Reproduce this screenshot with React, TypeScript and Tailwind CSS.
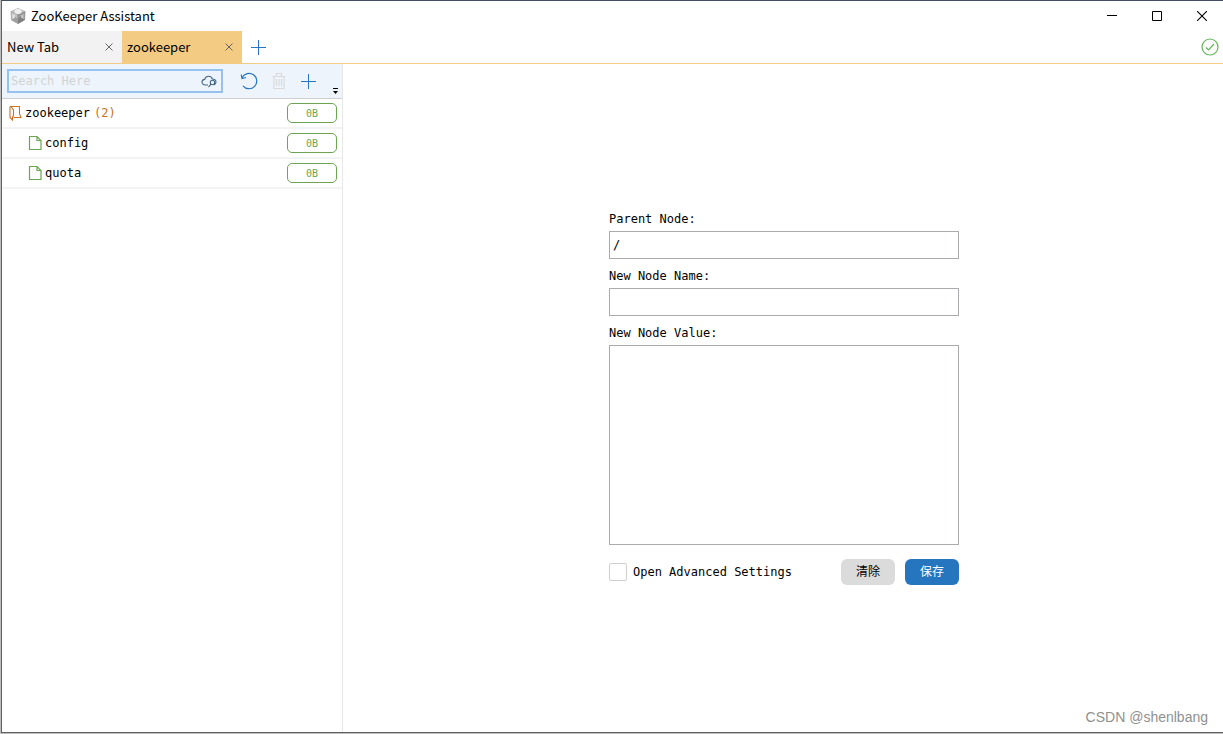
import React, { useState } from 'react';

interface TreeNode {
  name: string;
  size: string;
  count?: number;
  isRoot?: boolean;
}

const nodes: TreeNode[] = [
  { name: 'zookeeper', size: '0B', count: 2, isRoot: true },
  { name: 'config', size: '0B' },
  { name: 'quota', size: '0B' },
];

const tabs = ['New Tab', 'zookeeper'];

const CubeIcon = () => (
  <svg width="16" height="16" viewBox="0 0 16 16" aria-hidden="true">
    <path d="M8 .5 15 3.500 8 7 1 3.500Z" fill="#c8c8c8" stroke="#b0b0b0" strokeWidth=".8" />
    <path d="M1 3.500 8 7v8.500L1.500 12Z" fill="#c4c4c4" stroke="#a0a0a0" strokeWidth=".8" />
    <path d="M15 3.500 8 7v8.500l6.500-3.500Z" fill="#9a9a9a" stroke="#8a8a8a" strokeWidth=".8" />
    <ellipse cx="8" cy="3.500" rx="3.500" ry="2.500" fill="#efefef" />
    <path d="M1.500 12 5 8.500 8 11v4.500Z" fill="#a0a0a0" />
    <path d="M14.500 12 11 8.500 8 11v4.500Z" fill="#808080" />
    <path d="M2.500 6 5 7.500v2l-2.500 1.500Z" fill="#e2e2e2" />
    <path d="M13.500 6 11 7.500v2l2.500 1.500Z" fill="#c6c6c6" />
  </svg>
);

const PlusIcon = () => (
  <svg width="16" height="16" viewBox="0 0 16 16" aria-hidden="true">
    <path d="M8.500 1v15M1 8.500h15" fill="none" stroke="#2675bf" />
  </svg>
);

const CloseIcon = () => (
  <svg width="8" height="8" viewBox="0 0 8 8" aria-hidden="true">
    <path d="m.5.5 7 7m0-7-7 7" fill="none" stroke="currentColor" />
  </svg>
);

const CloudSearchIcon = () => (
  <svg width="16" height="16" viewBox="0 0 16 16" fill="none" stroke="#456687" strokeWidth="1.100" aria-hidden="true">
    <path d="M7 12H4.500C2.200 12 1 10.500 1 9c0-1.500 1-2.400 2.700-2.600C4.200 4.300 5.400 3.300 7.500 3.300c2 0 3.300 1 3.800 2.700 2.400 0 3.700 1.300 3.700 3 0 1.500-.8 2.500-2.200 3" />
    <circle cx="11.500" cy="9.500" r="2.200" />
    <path d="m10 11.200-2.500 3" />
  </svg>
);

const RefreshIcon = () => (
  <svg width="18" height="18" viewBox="0 0 18 18" fill="none" stroke="#2675bf" strokeWidth="1.200" aria-hidden="true">
    <path d="M2.200 5.500A7.700 7.700 0 1 1 3 13.800M1.200 2.500 2 6.500l4-1" />
  </svg>
);

const TrashIcon = () => (
  <svg width="14" height="18" viewBox="0 0 14 18" fill="none" stroke="#dadada" strokeWidth="1.200" aria-hidden="true">
    <path d="M.5 4.500h13M4.500 4V1.500h5V4M2 4.500v12h10v-12M4.500 7v7M7 7v7M9.500 7v7" />
  </svg>
);

const FolderIcon = () => (
  <svg width="13" height="16" viewBox="0 0 13 16" fill="none" stroke="#c67428" strokeWidth="1.100" aria-hidden="true">
    <path d="M1 1.500h9.500v7.500l1.500 3.500H4.500M1 1.500v11l2.500 2.500v-3l1-1.500V5L2 1.500" />
  </svg>
);

const FileIcon = () => (
  <svg width="14" height="16" viewBox="0 0 14 16" fill="none" stroke="#6ba553" strokeWidth="1.200" aria-hidden="true">
    <path d="M1.500 1.500H9l4 4v9H1.500ZM9 1.500v4h4" />
  </svg>
);

const WindowBar = () => (
  <header className="flex h-[30px] shrink-0 items-center pl-2">
    <CubeIcon />
    <h1 className="ml-[5px] flex-1 text-[13px] text-black">ZooKeeper Assistant</h1>
    <button aria-label="Minimize" className="flex h-[28px] w-[46px] items-center justify-center">
      <svg width="10" height="10" viewBox="0 0 10 10"><path d="M0 4.500h10" stroke="#000" /></svg>
    </button>
    <button aria-label="Maximize" className="flex h-[28px] w-[44px] items-center justify-center">
      <svg width="10" height="10" viewBox="0 0 10 10"><path d="M.5.5h9v9h-9Z" fill="none" stroke="#000" /></svg>
    </button>
    <button aria-label="Close" className="mr-[-2px] flex h-[28px] w-[46px] items-center justify-center">
      <svg width="10" height="10" viewBox="0 0 10 10"><path d="m0 0 10 10m0-10-10 10" fill="none" stroke="#000" strokeWidth="1.100" /></svg>
    </button>
  </header>
);

const Sidebar = () => (
  <aside className="flex w-[341px] shrink-0 flex-col border-r border-[#e8e8e8] font-['DejaVu_Sans_Mono','Liberation_Mono',monospace] text-[12px]">
    {/* Toolbar */}
    <div className="flex h-[35px] items-center border-b border-[#cfcfcf] bg-[#edf4fc] pl-[5px]">
      <div className="flex h-6 w-[216px] items-center border-2 border-[#96c2f0] pr-1">
        <input
          type="text"
          aria-label="Search"
          placeholder="Search Here"
          className="min-w-0 flex-1 bg-transparent pl-[2px] outline-none placeholder:text-[#d3d3d3]"
        />
        <CloudSearchIcon />
      </div>
      <button aria-label="Refresh" className="ml-[17px]"><RefreshIcon /></button>
      <button aria-label="Delete" className="ml-[14px]" disabled><TrashIcon /></button>
      <button aria-label="Add node" className="ml-[14px]"><PlusIcon /></button>
      <button aria-label="More" className="ml-[17px] self-end pb-1">
        <svg width="5" height="6" viewBox="0 0 5 6"><path d="M0 0h5v1H0ZM0 3h5L2.500 6Z" fill="#000" /></svg>
      </button>
    </div>

    {/* Node tree */}
    <ul>
      {nodes.map((node) => (
        <li
          key={node.name}
          className={`flex h-[30px] items-center border-b-2 border-[#f3f3f3] pr-[5px] ${node.isRoot ? 'pl-[7px]' : 'pl-[26px]'}`}
        >
          {node.isRoot ? <FolderIcon /> : <FileIcon />}
          <span className="ml-[3px]">{node.name}</span>
          {node.count && <span className="ml-1 text-[#c67428]">({node.count})</span>}
          <span className="ml-auto flex h-5 w-[50px] items-center justify-center rounded-[5px] border border-[#6ba553] text-[10px] text-[#6ba553]">
            {node.size}
          </span>
        </li>
      ))}
    </ul>
  </aside>
);

const NodeForm = () => {
  const [parent, setParent] = useState('/');
  const [name, setName] = useState('');
  const [value, setValue] = useState('');

  const handleClear = () => {
    setName('');
    setValue('');
  };

  return (
    <form
      onSubmit={(e) => e.preventDefault()}
      className="flex w-[350px] flex-col font-['DejaVu_Sans_Mono','Liberation_Mono','Noto_Sans_CJK_SC',monospace] text-[12px] leading-[17px]"
    >
      <label htmlFor="parent">Parent Node:</label>
      <input
        id="parent"
        value={parent}
        onChange={(e) => setParent(e.target.value)}
        className="mt-[3px] h-7 border border-[#aaabae] px-[3px] outline-none"
      />
      <label htmlFor="name" className="mt-[9px]">New Node Name:</label>
      <input
        id="name"
        value={name}
        onChange={(e) => setName(e.target.value)}
        className="mt-[3px] h-7 border border-[#aaabae] px-[3px] outline-none"
      />
      <label htmlFor="value" className="mt-[9px]">New Node Value:</label>
      <textarea
        id="value"
        value={value}
        onChange={(e) => setValue(e.target.value)}
        className="mt-[3px] h-[200px] resize-none border border-[#aaabae] px-[3px] outline-none"
      />
      <div className="mt-[14px] flex items-center">
        <label className="flex flex-1 items-center gap-[6px]">
          <input type="checkbox" className="size-[18px] appearance-none rounded-[2px] border border-[#cfcfcf] checked:bg-[#2675bf]" />
          Open Advanced Settings
        </label>
        <button type="button" onClick={handleClear} className="h-[26px] w-[54px] rounded-[6px] bg-[#dbdbdb]">清除</button>
        <button type="submit" className="ml-[10px] h-[26px] w-[54px] rounded-[6px] bg-[#2675bf] text-white">保存</button>
      </div>
    </form>
  );
};

const App: React.FC = () => {
  const [activeTab, setActiveTab] = useState('zookeeper');

  return (
    <div className="h-screen overflow-hidden border-b border-l border-[#bdbdbd] font-['Noto_Sans_CJK_SC','Noto_Sans',sans-serif]">
      <div className="flex h-full flex-col border-y border-l border-t-[#405060] border-b-[#606060] border-l-[#606060] bg-white text-black">
        <WindowBar />

        {/* Tabs */}
        <nav className="flex h-[33px] shrink-0 items-center border-b border-[#f4cb82] pr-1">
          {tabs.map((tab) => (
            <div
              key={tab}
              className={`flex h-8 w-[120px] items-center justify-between pl-[5px] pr-[9px] text-[13px] ${tab === activeTab ? 'bg-[#f4cb82]' : 'bg-[#f2f2f2]'}`}
            >
              <button onClick={() => setActiveTab(tab)}>{tab}</button>
              <button aria-label={`Close ${tab}`} className="text-[#666]"><CloseIcon /></button>
            </div>
          ))}
          <button aria-label="Add tab" className="ml-2"><PlusIcon /></button>
          <svg className="ml-auto" width="18" height="18" viewBox="0 0 18 18" fill="none" stroke="#62b557" strokeWidth="1.200">
            <circle cx="9" cy="9" r="8" />
            <path d="m5 9.500 2.500 2.500 5.500-6" />
          </svg>
        </nav>

        <div className="flex min-h-0 flex-1">
          <Sidebar />
          <main className="relative flex flex-1 items-center justify-center pl-0.5">
            <NodeForm />
            {/* Watermark over the canvas */}
            <p className="absolute bottom-1 right-[15px] font-['Liberation_Sans',sans-serif] text-[14px] text-[#909090]">CSDN @shenlbang</p>
          </main>
        </div>
      </div>
    </div>
  );
};

export default App;
